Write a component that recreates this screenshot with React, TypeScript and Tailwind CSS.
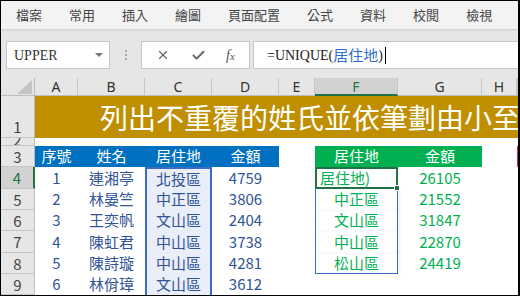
import React from "react";
import { X, Check } from "lucide-react";

const tabs = ["檔案", "常用", "插入", "繪圖", "頁面配置", "公式", "資料", "校閱", "檢視"];
const cols = ["A", "B", "C", "D", "E", "F", "G", "H", ""];

const people = [
  { no: 1, name: "連湘亭", area: "北投區", amt: 4759 },
  { no: 2, name: "林晏竺", area: "中正區", amt: 3806 },
  { no: 3, name: "王奕帆", area: "文山區", amt: 2404 },
  { no: 4, name: "陳虹君", area: "中山區", amt: 3738 },
  { no: 5, name: "陳詩璇", area: "中山區", amt: 4281 },
  { no: 6, name: "林佾璋", area: "文山區", amt: 3612 },
];

const result = [
  { area: "居住地)", amt: 26105 },
  { area: "中正區", amt: 21552 },
  { area: "文山區", amt: 31847 },
  { area: "中山區", amt: 22870 },
  { area: "松山區", amt: 24419 },
];

const cjk = "font-['Noto_Sans_CJK_TC','Noto_Sans',sans-serif]";

function RowHead({ n, sel, end }: { n: string; sel?: boolean; end?: boolean }) {
  return (
    <div
      className={`flex justify-center overflow-hidden border-b border-[#c4c4c4] text-[15px] leading-none ${
        end ? "items-end pb-[3px]" : "items-center"
      } ${sel ? "bg-[#d2d2d2] border-r-2 border-r-[#217346] text-[#217346]" : "bg-[#e6e6e6] border-r border-r-[#bdbdbd] text-[#444]"}`}
    >
      {n}
    </div>
  );
}

export default function App() {
  return (
    <div className={`w-[520px] h-[296px] overflow-hidden border border-black border-r-2 bg-white flex flex-col ${cjk}`}>
      {/* ribbon tabs */}
      <div className="h-[28px] shrink-0 bg-[#f3f3f3] flex items-center pl-[15px] gap-[27px] text-[13px] text-[#444] shadow-[0_1px_2px_rgba(0,0,0,0.12)] relative z-10">
        {tabs.map((t) => (
          <span key={t}>{t}</span>
        ))}
      </div>

      {/* formula bar */}
      <div className="h-[49px] shrink-0 bg-[#e6e6e6] flex pt-[12px] pb-[9px]">
        <div className="ml-[5px] w-[104px] bg-white border border-[#c6c6c6] flex items-center justify-between pl-[7px] pr-[6px]">
          <span className="font-['Liberation_Serif',serif] text-[14px] text-[#333]">UPPER</span>
          <span className="w-0 h-0 border-x-[4px] border-x-transparent border-t-[4px] border-t-[#777]" />
        </div>
        <div className="w-[31px] flex flex-col items-center justify-center gap-[2px]">
          <span className="w-[2px] h-[2px] bg-[#aaa]" />
          <span className="w-[2px] h-[2px] bg-[#aaa]" />
          <span className="w-[2px] h-[2px] bg-[#aaa]" />
        </div>
        <div className="w-[109px] bg-white border border-[#c6c6c6] flex items-center justify-around px-[4px] text-[#666]">
          <X size={14} strokeWidth={2} />
          <Check size={15} strokeWidth={3.2} />
          <span className="font-['Liberation_Serif',serif] italic text-[14px] text-[#555]">
            f<span className="text-[11px]">x</span>
          </span>
        </div>
        <div className="flex-1 ml-[3px] bg-white border-y border-l border-[#c6c6c6] flex items-center pl-[13px] text-[15px] text-[#222]">
          <span className="font-['Liberation_Serif',serif] text-[14px]">=UNIQUE(</span>
          <span className="text-[#2e6fd0]">居住地</span>
          <span className="font-['Liberation_Serif',serif] text-[14px]">)</span>
          <span className="ml-[2px] w-px h-[17px] bg-black" />
        </div>
      </div>

      {/* sheet */}
      <div className="grid grid-cols-[34px_43px_67px_67px_67px_36px_83px_84px_35px_1fr] grid-rows-[18px_42px_8px_21px_22px_21px_21px_22px_21px_21px] flex-1 overflow-hidden">
        {/* column headers */}
        <div className="bg-[#e6e6e6] border-r border-b border-[#bdbdbd] flex items-end justify-end pr-[2px] pb-[1px]">
          <span className="w-0 h-0 border-l-[15px] border-l-transparent border-b-[14px] border-b-[#c4c4c4]" />
        </div>
        {cols.map((c, i) =>
          c === "F" ? (
            <div key={i} className="bg-[#d2d2d2] border-r border-[#c6c6c6] border-b-2 border-b-[#217346] flex items-center justify-center text-[14px] text-[#217346] font-['Noto_Sans',sans-serif]">
              {c}
            </div>
          ) : (
            <div key={i} className="bg-[#e6e6e6] border-r border-b border-[#c6c6c6] border-b-[#bdbdbd] flex items-center justify-center text-[14px] text-[#333] font-['Noto_Sans',sans-serif]">
              {c}
            </div>
          )
        )}

        {/* row 1: title */}
        <RowHead n="1" end />
        <div className="col-span-9 bg-[#bf8f00] flex items-center pl-[65px] overflow-hidden whitespace-nowrap text-[28px] leading-none text-white">
          列出不重覆的姓氏並依筆劃由小至大排列
        </div>

        {/* row 2 */}
        <div className="bg-[#e6e6e6] border-r border-b border-[#bdbdbd] border-b-[#c4c4c4] flex items-end justify-center overflow-hidden text-[15px] leading-[10px] text-[#444]">
          2
        </div>
        <div className="col-span-9 bg-white" />

        {/* row 3: headers */}
        <RowHead n="3" />
        {["序號", "姓名", "居住地", "金額"].map((h) => (
          <div key={h} className="bg-[#0070c0] text-white text-[15px] flex items-center justify-center">
            {h}
          </div>
        ))}
        <div />
        {["居住地", "金額"].map((h) => (
          <div key={h} className="bg-[#00b050] text-white text-[15px] flex items-center justify-center">
            {h}
          </div>
        ))}
        <div />
        <div className="bg-[#e8265e]" />

        {/* rows 4-9 */}
        {people.map((p, i) => {
          const r = result[i];
          return (
            <React.Fragment key={p.no}>
              <RowHead n={String(i + 4)} sel={i === 0} />
              <div className="flex items-center justify-center text-[15px] text-[#305496]">{p.no}</div>
              <div className="flex items-center justify-center text-[15px] text-[#305496]">{p.name}</div>
              <div
                className={`flex items-center justify-center text-[15px] text-[#305496] bg-[#e9eef8] border-x-2 border-[#3b6cc8] ${
                  i === 0 ? "border-t-2" : ""
                }`}
              >
                {p.area}
              </div>
              <div className="flex items-center justify-center text-[15px] text-[#305496]">{p.amt}</div>
              <div />
              {i === 0 ? (
                <div className="relative z-10 border-2 border-[#217346] flex items-center pl-[3px] text-[15px] text-[#00b050] bg-white">
                  {r.area}
                  <span className="absolute -right-[4px] -bottom-[4px] w-[6px] h-[6px] bg-[#217346] border border-white" />
                </div>
              ) : r ? (
                <div
                  className={`flex items-center justify-center text-[15px] text-[#00b050] border-x border-[#3b6cc8] shadow-[2px_0_3px_rgba(0,0,0,0.06)] ${
                    i === 4 ? "border-b" : ""
                  }`}
                >
                  {r.area}
                </div>
              ) : (
                <div />
              )}
              <div className="flex items-center justify-center text-[15px] text-[#00b050]">{r ? r.amt : ""}</div>
              <div />
              <div />
            </React.Fragment>
          );
        })}
      </div>
    </div>
  );
}
